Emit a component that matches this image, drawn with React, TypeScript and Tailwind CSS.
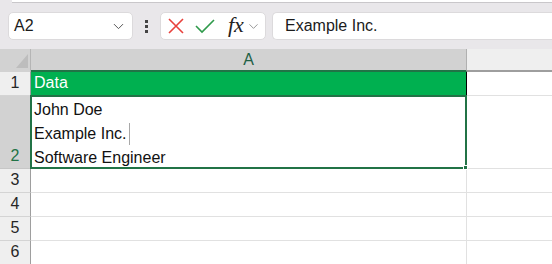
import { ChevronDown } from "lucide-react";

const font = { fontFamily: '"Liberation Sans", Arial, sans-serif' };

function Toolbar() {
  return (
    <div className="h-[49px] bg-[#e9e7ea] relative">
      {/* ribbon edge peeking at the top */}
      <div className="absolute left-[12px] right-0 top-0 h-[3px] bg-white border-b border-[#c9c7ca]" />
      <div className="flex items-center pt-3 pl-2">
        <div className="w-[125px] h-7 bg-white rounded-[5px] border border-[#dcdadc] flex items-center justify-between pl-[5px] pr-[5px]">
          <span className="text-[16px] text-[#1b1b1b]">A2</span>
          <ChevronDown size={17} strokeWidth={1.4} className="text-[#555]" />
        </div>
        <div className="w-[27px] flex flex-col items-center gap-[2px]">
          <span className="w-[3px] h-[3px] bg-[#444]" />
          <span className="w-[3px] h-[3px] bg-[#444]" />
          <span className="w-[3px] h-[3px] bg-[#444]" />
        </div>
        <div className="w-[106px] h-7 bg-white rounded-[5px] border border-[#dcdadc] flex items-center pl-[6px]">
          <svg width="18" height="18" viewBox="0 0 18 18">
            <path d="M2 2L16 16M16 2L2 16" stroke="#e8413c" strokeWidth="1.6" />
          </svg>
          <svg width="22" height="18" viewBox="0 0 22 18" className="ml-[9px]">
            <path d="M2 9L8 15L20 3" stroke="#2f9a4b" strokeWidth="1.6" fill="none" />
          </svg>
          <span
            className="ml-[12px] text-[22px] italic text-[#222] leading-none -mt-[2px]"
            style={{ fontFamily: '"Liberation Serif", serif' }}
          >
            fx
          </span>
          <ChevronDown size={15} strokeWidth={1.4} className="ml-[2px] text-[#8a8a8a]" />
        </div>
        <div className="ml-[6px] flex-1 h-7 bg-white border-y border-l border-[#dcdadc] rounded-l-[5px] flex items-center pl-3">
          <span className="text-[16px] text-[#1b1b1b]">Example Inc.</span>
        </div>
      </div>
    </div>
  );
}

function RowHead({ n, h, selected }: { n: string; h: string; selected?: boolean }) {
  return (
    <div
      className={`${h} flex items-end justify-center border-r border-b border-r-[#9e9e9e] ${
        selected ? "bg-[#d2d2d2] text-[#217346] border-b-[#c6c6c6]" : "bg-[#efefef] text-[#262626] border-b-[#d4d4d4]"
      } text-[16px]`}
    >
      {n}
    </div>
  );
}

export default function App() {
  return (
    <div className="w-[552px] h-[264px] overflow-hidden bg-white" style={font}>
      <Toolbar />
      <div className="grid grid-cols-[31px_436px_1fr] text-[16px]">
        {/* header row */}
        <div className="h-[23px] bg-[#d2d2d2] border-r border-[#b5b5b5] relative">
          <svg width="12" height="14" viewBox="0 0 12 14" className="absolute left-[16px] top-[5px]">
            <path d="M12 0L12 14L0 14Z" fill="#bdbdbd" />
          </svg>
        </div>
        <div className="h-[23px] bg-[#d2d2d2] border-r border-[#b0b0b0] border-b-2 border-b-[#217346] flex items-center justify-center text-[#1e5f45]">
          A
        </div>
        <div className="h-[23px] bg-[#efefef] border-b-2 border-b-[#9e9e9e]" />

        {/* row 1 */}
        <RowHead n="1" h="h-[24px]" />
        <div className="h-[24px] bg-[#00b050] text-white flex items-end pb-[1px] pl-[3px] border-r border-black">
          Data
        </div>
        <div className="h-[24px] border-b border-[#e1e1e1]" />

        {/* row 2 (selected, wrapped text) */}
        <RowHead n="2" h="h-[73px]" selected />
        <div className="h-[74px] relative border-2 border-[#217346] -mt-[1px] -ml-[1px] pl-[2px] text-[#111] leading-[24px] pt-[1px]">
          <div>John Doe</div>
          <div className="flex items-center">
            Example Inc.
            <span className="ml-[3px] w-px h-[22px] bg-[#a8a8a8]" />
          </div>
          <div>Software Engineer</div>
          <span className="absolute -right-[3px] -bottom-[3px] w-[5px] h-[5px] bg-[#217346] border border-white" />
        </div>
        <div className="h-[73px] border-b border-[#e1e1e1]" />

        {["3", "4", "5", "6"].map((n) => (
          <div key={n} className="contents">
            <RowHead n={n} h="h-[24px]" />
            <div className="h-[24px] border-b border-r border-[#e1e1e1]" />
            <div className="h-[24px] border-b border-[#e1e1e1]" />
          </div>
        ))}
      </div>
    </div>
  );
}
